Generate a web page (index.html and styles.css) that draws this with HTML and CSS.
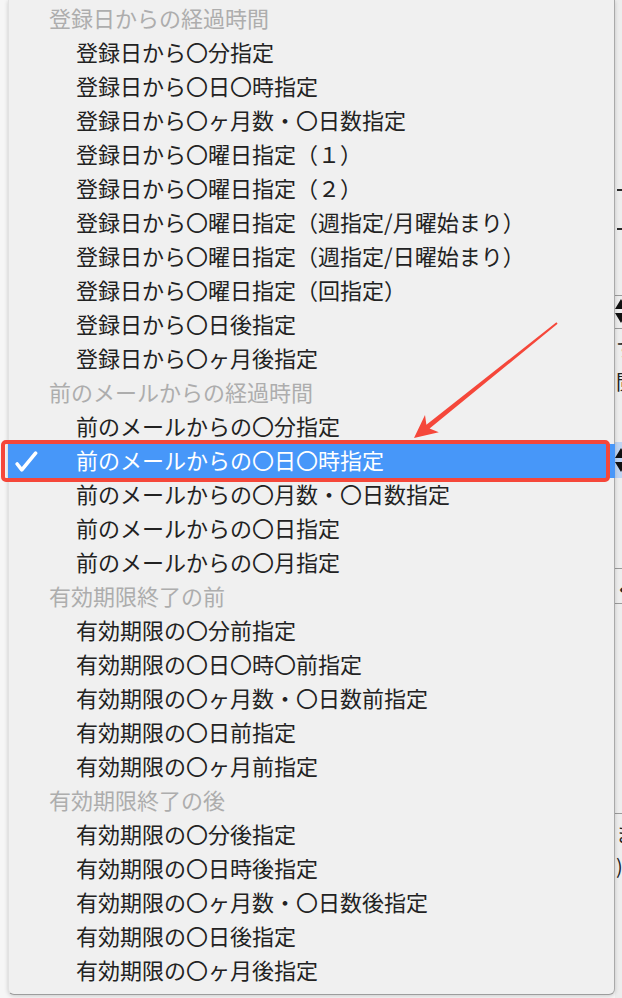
FILE: index.html
```html
<!DOCTYPE html>
<html lang="ja">
<head>
<meta charset="utf-8">
<title>Menu</title>
<link rel="stylesheet" href="styles.css">
</head>
<body>
<div class="screen">
  <div class="gutter"></div>
  <div class="menu">
    <div class="hdr">登録日からの経過時間</div>
    <div class="item">登録日から〇分指定</div>
    <div class="item">登録日から〇日〇時指定</div>
    <div class="item">登録日から〇ヶ月数・〇日数指定</div>
    <div class="item">登録日から〇曜日指定（１）</div>
    <div class="item">登録日から〇曜日指定（２）</div>
    <div class="item">登録日から〇曜日指定（週指定/月曜始まり）</div>
    <div class="item">登録日から〇曜日指定（週指定/日曜始まり）</div>
    <div class="item">登録日から〇曜日指定（回指定）</div>
    <div class="item">登録日から〇日後指定</div>
    <div class="item">登録日から〇ヶ月後指定</div>
    <div class="hdr">前のメールからの経過時間</div>
    <div class="item">前のメールからの〇分指定</div>
    <div class="item selected"><span class="mark"><svg width="24" height="24" viewBox="0 0 24 24"><path d="M2.2 15 L6.8 20.8 L20.6 4.2" fill="none" stroke="#fff" stroke-width="3.6" stroke-linecap="round" stroke-linejoin="round"/></svg></span>前のメールからの〇日〇時指定</div>
    <div class="item">前のメールからの〇月数・〇日数指定</div>
    <div class="item">前のメールからの〇日指定</div>
    <div class="item">前のメールからの〇月指定</div>
    <div class="hdr">有効期限終了の前</div>
    <div class="item">有効期限の〇分前指定</div>
    <div class="item">有効期限の〇日〇時〇前指定</div>
    <div class="item">有効期限の〇ヶ月数・〇日数前指定</div>
    <div class="item">有効期限の〇日前指定</div>
    <div class="item">有効期限の〇ヶ月前指定</div>
    <div class="hdr">有効期限終了の後</div>
    <div class="item">有効期限の〇分後指定</div>
    <div class="item">有効期限の〇日時後指定</div>
    <div class="item">有効期限の〇ヶ月数・〇日数後指定</div>
    <div class="item">有効期限の〇日後指定</div>
    <div class="item">有効期限の〇ヶ月後指定</div>
  </div>
  <div class="window">
    <div class="dash d1"></div>
    <div class="dash d2"></div>
    <div class="rule r1"></div>
    <div class="stepper s1"><svg width="8" height="26" viewBox="0 0 8 26"><path d="M0 11 L6 1 L12 11 Z M0 15 L12 15 L6 25 Z" fill="#111"/></svg></div>
    <div class="rule r2"></div>
    <div class="glyph g1">す</div>
    <div class="glyph g2">閲</div>
    <div class="band"><div class="stepper"><svg width="8" height="26" viewBox="0 0 8 26"><path d="M0 11 L6 1 L12 11 Z M0 15 L12 15 L6 25 Z" fill="#111"/></svg></div></div>
    <div class="rule r3"></div>
    <div class="glyph g3">く</div>
    <div class="rule r4"></div>
    <div class="rule r5"></div>
    <div class="glyph g4">ま</div>
    <div class="glyph g5">)</div>
  </div>
  <svg class="annot" width="622" height="998" viewBox="0 0 622 998">
    <polygon points="556.4,322.2 426.4,424.8 425,415 414,438 438.8,432.2 429.6,428.6 557.6,323.8" fill="#f5473a"/>
  </svg>
</div>
</body>
</html>
```
FILE: styles.css
```css
html, body {
  margin: 0;
  padding: 0;
}
body {
  background: #f6f6f6;
  font-family: "Noto Sans CJK JP", "Noto Sans", sans-serif;
  overflow: hidden;
}
.screen {
  position: relative;
  width: 622px;
  height: 998px;
  display: flex;
  align-items: flex-start;
  overflow: hidden;
}
.gutter {
  width: 8px;
  flex: none;
}
.menu {
  width: 607px;
  flex: none;
  box-sizing: border-box;
  background: #f0f0f0;
  border-right: 1px solid #a9a9a9;
  border-bottom: 1px solid #9d9d9d;
  border-left: 1px solid #e2e2e2;
  border-radius: 0 0 6px 6px;
  padding: 2px 0 6px;
  box-shadow: 0 1px 4px rgba(0, 0, 0, 0.18);
  position: relative;
  z-index: 1;
}
.hdr, .item {
  height: 34px;
  box-sizing: border-box;
  padding-bottom: 4px;
  line-height: 30px;
  font-size: 22px;
  white-space: nowrap;
  display: flex;
  align-items: center;
}
.hdr {
  color: #adadad;
  padding-left: 40px;
}
.item {
  color: #222;
  padding-left: 67px;
}
.item.selected {
  position: relative;
  background: #4797f9;
  color: #fff;
  padding-left: 0;
  margin: 0 -1px;
}
.item.selected::after {
  content: "";
  position: absolute;
  left: -7px;
  top: -4px;
  right: 5px;
  bottom: -4px;
  border: 4px solid #f5473a;
  border-radius: 5px;
}
.mark {
  width: 68px;
  flex: none;
  display: flex;
  align-items: center;
  padding-left: 7px;
  margin-top: 4px;
  box-sizing: border-box;
}
.mark svg {
  display: block;
}
.window {
  width: 7px;
  height: 998px;
  flex: none;
  overflow: hidden;
  background: #ededed;
  display: flex;
  flex-direction: column;
}
.dash {
  height: 2px;
  width: 5px;
  margin-left: 2px;
  background: #2a2a2a;
  flex: none;
}
.d1 { margin-top: 189px; }
.d2 { margin-top: 37px; }
.rule {
  height: 1px;
  background: #9a9a9a;
  flex: none;
}
.r1 { margin-top: 65px; }
.r2 { margin-top: 4px; }
.r3 { margin-top: 90px; }
.r4 { margin-top: 1px; }
.r5 { margin-top: 209px; }
.stepper {
  height: 26px;
  flex: none;
}
.stepper svg {
  display: block;
  margin-left: 0;
}
.s1 { margin-top: 2px; }
.glyph {
  height: 24px;
  line-height: 24px;
  font-size: 20px;
  color: #222;
  white-space: nowrap;
  margin-left: 1px;
  flex: none;
}
.g1 { margin-top: 8px; }
.g2 { margin-top: 9px; }
.g3 { margin-top: 9px; }
.g4 { margin-top: 8px; }
.g5 { margin-top: 8px; }
.band {
  margin-top: 48px;
  height: 36px;
  background: #bfd5f2;
  display: flex;
  align-items: center;
  flex: none;
}
.annot {
  position: absolute;
  left: 0;
  top: 0;
  pointer-events: none;
  z-index: 2;
}
```
